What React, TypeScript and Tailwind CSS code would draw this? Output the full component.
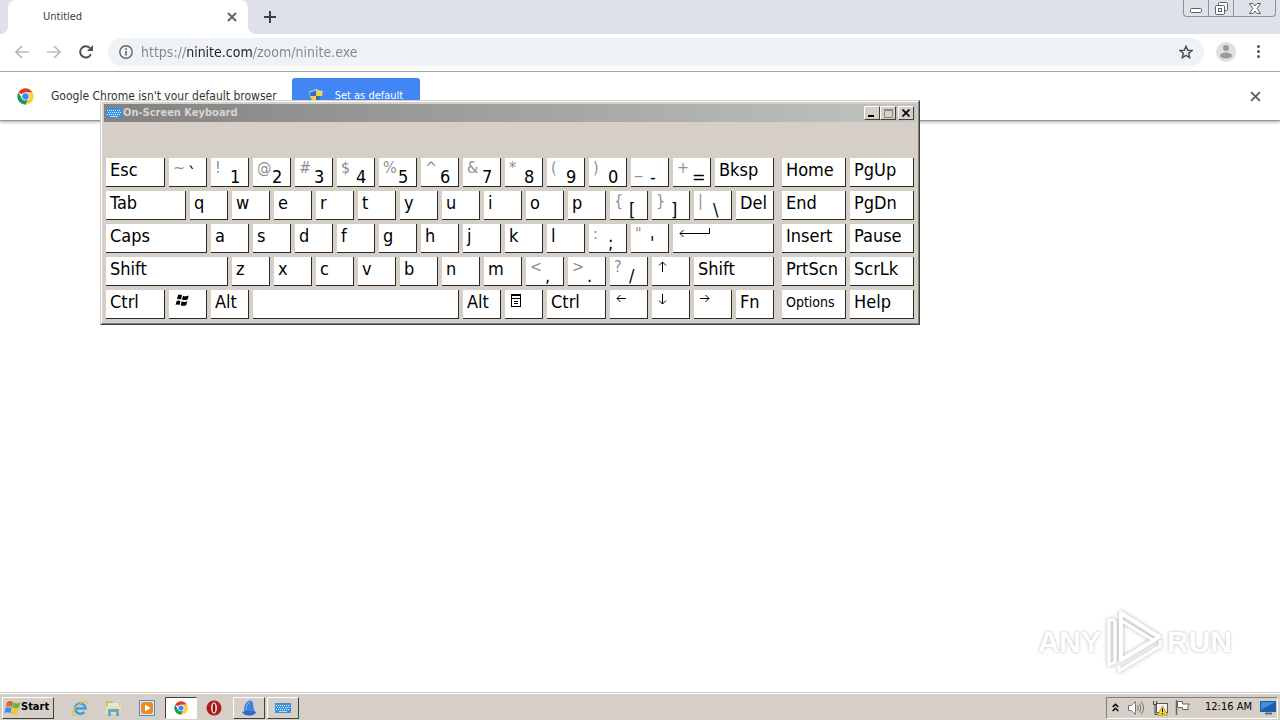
import React from "react";

const UI = "font-['DejaVu_Sans_Condensed','Noto_Sans',sans-serif]";
const BASE = "font-['Noto_Sans',sans-serif]";

function ChromeLogo({ size }: { size: number }) {
  return (
    <svg width={size} height={size} viewBox="0 0 48 48" aria-hidden="true">
      <circle cx="24" cy="24" r="23" fill="#fff" />
      <path d="M24 24 L4.1 12.5 A23 23 0 0 1 43.9 12.5 L24 12.5 Z" fill="#dd3b2d" />
      <path d="M4.1 12.5 A23 23 0 0 0 24 47 L34 29.8 L24 24 L14 29.8 Z" fill="#1a9a54" />
      <path d="M43.9 12.5 A23 23 0 0 1 24 47 L34 29.8 L24 12.5 Z" fill="#fdcf3f" />
      <circle cx="24" cy="24" r="11.5" fill="#fff" />
      <circle cx="24" cy="24" r="9" fill="#4285f4" />
    </svg>
  );
}

function ShieldIcon() {
  return (
    <svg width="14" height="14" viewBox="0 0 14 14" aria-hidden="true">
      <path d="M7 0 Q10 2 13.5 2 Q14 10 7 14 Q0 10 .5 2 Q4 2 7 0Z" fill="#d9e4ee" />
      <path d="M7 1 V7 H1.3 Q1 5 1.3 2.8 Q4.5 2.5 7 1Z" fill="#2f6fc4" />
      <path d="M7 1 V7 H12.7 Q13 5 12.7 2.8 Q9.5 2.5 7 1Z" fill="#f5cf3a" />
      <path d="M7 7 V13 Q2.2 11 1.3 7Z" fill="#f5cf3a" />
      <path d="M7 7 V13 Q11.8 11 12.7 7Z" fill="#2f6fc4" />
    </svg>
  );
}

function KeyboardIcon() {
  return (
    <svg width="16" height="10" viewBox="0 0 16 10" aria-hidden="true" shapeRendering="crispEdges">
      <rect width="16" height="10" fill="#3d90de" />
      <path d="M1 2.5h14M2 4.5h13M1 6.5h14" stroke="#e6f3ff" strokeDasharray="1 1" />
      <path d="M4 8.5h8" stroke="#b9dbf8" />
    </svg>
  );
}

function CrossIcon({ size, width }: { size: number; width: number }) {
  return (
    <svg width={size} height={size} viewBox="0 0 10 10" aria-hidden="true">
      <path d="M1 1 L9 9 M9 1 L1 9" stroke="#5f6368" strokeWidth={width} />
    </svg>
  );
}

function TabStrip() {
  return (
    <div className="flex h-[34px] items-start bg-[#dee1e8] pl-2">
      <div className="relative flex h-[34px] w-60 items-center justify-between rounded-t-lg bg-white pr-[11px] pl-[35px]">
        <span className={`text-[11px] leading-4 text-[#3c4043] ${UI}`}>Untitled</span>
        <button aria-label="Close tab" className="flex">
          <CrossIcon size={10} width={1.8} />
        </button>
        <span className="absolute bottom-0 -left-2 size-2 bg-[radial-gradient(circle_at_0_0,transparent_8px,white_8px)]" />
        <span className="absolute -right-2 bottom-0 size-2 bg-[radial-gradient(circle_at_100%_0,transparent_8px,white_8px)]" />
      </div>
      <button aria-label="New tab" className="mt-[11px] ml-4 flex">
        <svg width="12" height="12" viewBox="0 0 12 12" aria-hidden="true">
          <path d="M6 0V12M0 6H12" stroke="#3c4043" strokeWidth="2" />
        </svg>
      </button>
      <div className="mr-1 ml-auto flex h-[17px] divide-x divide-[#8d919b] rounded-b-[4px] border border-t-0 border-[#8d919b] text-[#5b5f68]">
        <button aria-label="Minimize" className="flex w-[25px] items-end justify-center pb-[3px]">
          <svg width="12" height="5" viewBox="0 0 12 5" aria-hidden="true">
            <rect x=".5" y=".5" width="11" height="4" rx="1" fill="#fff" stroke="currentColor" />
          </svg>
        </button>
        <button aria-label="Restore" className="flex w-[25px] items-center justify-center">
          <svg width="13" height="13" viewBox="0 0 13 13" aria-hidden="true" fill="#fff" stroke="currentColor">
            <rect x="3.5" y=".5" width="9" height="8" rx="1" />
            <rect x=".5" y="3.5" width="9" height="9" rx="1" />
            <rect x="3.5" y="6.5" width="3" height="3" />
          </svg>
        </button>
        <button aria-label="Close window" className="flex w-[41px] items-center justify-center">
          <svg width="12" height="11" viewBox="0 0 12 11" aria-hidden="true">
            <path
              d="M.5 .5H4L6 3L8 .5H11.5L8.2 5.5L11.5 10.5H8L6 8L4 10.5H.5L3.8 5.5Z"
              fill="#fff"
              stroke="currentColor"
            />
          </svg>
        </button>
      </div>
    </div>
  );
}

function Toolbar() {
  return (
    <div className="flex h-[38px] items-center border-b border-[#b0b0b0] bg-white pr-5 pb-[2px] pl-[15px]">
      <button aria-label="Back" className="flex">
        <svg width="14" height="14" viewBox="0 0 14 14" fill="none" stroke="#b8babd" strokeWidth="1.7" aria-hidden="true">
          <path d="M14 7H1.5M7 1L1 7L7 13" />
        </svg>
      </button>
      <button aria-label="Forward" className="ml-[18px] flex">
        <svg width="14" height="14" viewBox="0 0 14 14" fill="none" stroke="#b8babd" strokeWidth="1.7" aria-hidden="true">
          <path d="M0 7H12.5M7 1L13 7L7 13" />
        </svg>
      </button>
      <button aria-label="Reload" className="ml-[18px] flex">
        <svg width="14" height="14" viewBox="0 0 14 14" aria-hidden="true">
          <path d="M12 9A5.6 5.6 0 1 1 11 3.2" fill="none" stroke="#505357" strokeWidth="2" />
          <path d="M14 0V6H8Z" fill="#505357" />
        </svg>
      </button>
      <div className="ml-[15px] flex h-7 grow items-center rounded-full bg-[#f0f3f6] px-[11px]">
        <svg width="14" height="14" viewBox="0 0 14 14" fill="none" stroke="#5f6368" aria-hidden="true">
          <circle cx="7" cy="7" r="6.2" strokeWidth="1.4" />
          <path d="M7 6V10.5M7 3.3V4.9" strokeWidth="1.6" />
        </svg>
        <input
          aria-label="Address"
          defaultValue="https://ninite.com/zoom/ninite.exe"
          spellCheck={false}
          className={`ml-2 h-6 min-w-0 grow bg-[linear-gradient(90deg,#80868b_45px,#202124_45px,#202124_112px,#80868b_112px)] bg-clip-text text-[14px] text-transparent outline-none ${UI}`}
        />
        <button aria-label="Bookmark" className="flex">
          <svg width="14" height="14" viewBox="0 0 14 14" aria-hidden="true">
            <path
              d="M7 1.2L8.7 5.2L13 5.5L9.7 8.3L10.7 12.6L7 10.3L3.3 12.6L4.3 8.3L1 5.5L5.3 5.2Z"
              fill="none"
              stroke="#505357"
              strokeWidth="1.5"
            />
          </svg>
        </button>
      </div>
      <button aria-label="Profile" className="ml-3 flex">
        <svg width="20" height="20" viewBox="0 0 20 20" aria-hidden="true">
          <circle cx="10" cy="10" r="10" fill="#dfdfdf" />
          <circle cx="10" cy="6" r="3" fill="#9a9a9a" />
          <ellipse cx="10" cy="13.5" rx="6" ry="3" fill="#9a9a9a" />
        </svg>
      </button>
      <button aria-label="Menu" className="ml-[21px] flex w-[3px] flex-col gap-[2px]">
        <span className="size-[3px] rounded-full bg-[#505357]" />
        <span className="size-[3px] rounded-full bg-[#505357]" />
        <span className="size-[3px] rounded-full bg-[#505357]" />
      </button>
    </div>
  );
}

function InfoBar() {
  return (
    <div className="flex h-[49px] items-center border-b border-[#969696] bg-white pr-[19px] pl-[17px] shadow-[0_1px_3px_rgba(0,0,0,0.35)]">
      <ChromeLogo size={17} />
      <span className={`ml-[17px] text-[12px] text-[#333] ${UI}`}>
        Google Chrome isn't your default browser
      </span>
      <button
        className={`ml-[15px] flex h-9 items-center gap-3 rounded-[3px] bg-[#4285f4] px-[17px] text-[11px] text-white ${UI}`}
      >
        <ShieldIcon />
        Set as default
      </button>
      <button aria-label="Dismiss" className="ml-auto flex">
        <CrossIcon size={11} width={1.8} />
      </button>
    </div>
  );
}

type KeyDef = {
  main?: string;
  alt?: string;
  icon?: React.ReactNode;
  label?: string;
  width?: string;
  small?: boolean;
  high?: boolean;
};

const stroke = { fill: "none", stroke: "#000", strokeWidth: 1 };

const arrowLeft = (
  <svg width="10" height="9" viewBox="0 0 10 9" {...stroke} aria-hidden="true">
    <path d="M10 4.5H1M4.5 1L1 4.5L4.5 8" />
  </svg>
);
const arrowRight = (
  <svg width="10" height="9" viewBox="0 0 10 9" {...stroke} aria-hidden="true">
    <path d="M0 4.5H9M5.5 1L9 4.5L5.5 8" />
  </svg>
);
const arrowUp = (
  <svg width="9" height="11" viewBox="0 0 9 11" {...stroke} aria-hidden="true">
    <path d="M4.5 11V1M1 4.5L4.5 1L8 4.5" />
  </svg>
);
const arrowDown = (
  <svg width="9" height="11" viewBox="0 0 9 11" {...stroke} aria-hidden="true">
    <path d="M4.5 0V10M1 6.5L4.5 10L8 6.5" />
  </svg>
);
const enterArrow = (
  <svg width="32" height="10" viewBox="0 0 32 10" {...stroke} aria-hidden="true">
    <path d="M30.5 0V5.5H1M4.5 2L1 5.5L4.5 9" />
  </svg>
);
const winLogo = (
  <svg width="14" height="13" viewBox="0 0 14 13" fill="#000" aria-hidden="true">
    <path d="M3 1Q5 0 7 1.3L6 5.6Q4 4.4 2 5.3Z" />
    <path d="M8 1.8Q10.5 3 13.7 1.6L12.6 5.6Q9.5 6.6 7 5.6Z" />
    <path d="M1.7 6.9Q3.7 6 5.4 7L4.5 11Q2.7 9.9 .5 10.8Z" />
    <path d="M6.7 7.3Q9.3 8.5 12.3 7.2L11.2 11.2Q8.2 12.3 5.7 11.2Z" />
  </svg>
);
const menuIcon = (
  <svg width="10" height="13" viewBox="0 0 10 13" shapeRendering="crispEdges" aria-hidden="true">
    <path d="M.5 .5H9.5V12.5H.5Z" fill="#fff" stroke="#000" />
    <path d="M0 1.5H10M0 4.5H10M3 7.5H7M3 9.5H7" stroke="#000" />
  </svg>
);

const W59 = "w-[59px]";
const W64 = "w-16";
const W80 = "w-20";
const W101 = "w-[101px]";

const pair = (alt: string, main: string): KeyDef => ({ alt, main });
const letters = (s: string): KeyDef[] => s.split("").map((main) => ({ main }));

const mainRows: KeyDef[][] = [
  [
    { main: "Esc", width: W59 },
    { alt: "~", main: "`", high: true },
    pair("!", "1"),
    pair("@", "2"),
    pair("#", "3"),
    pair("$", "4"),
    pair("%", "5"),
    pair("^", "6"),
    pair("&", "7"),
    pair("*", "8"),
    pair("(", "9"),
    pair(")", "0"),
    pair("_", "-"),
    pair("+", "="),
    { main: "Bksp", width: W59 },
  ],
  [
    { main: "Tab", width: W80 },
    ...letters("qwertyuiop"),
    pair("{", "["),
    pair("}", "]"),
    pair("|", "\\"),
    { main: "Del" },
  ],
  [
    { main: "Caps", width: W101 },
    ...letters("asdfghjkl"),
    pair(":", ";"),
    pair('"', "'"),
    { icon: enterArrow, label: "Enter", width: W101 },
  ],
  [
    { main: "Shift", width: "w-[122px]" },
    ...letters("zxcvbnm"),
    pair("<", ","),
    pair(">", "."),
    pair("?", "/"),
    { icon: arrowUp, label: "Up" },
    { main: "Shift", width: W80 },
  ],
  [
    { main: "Ctrl", width: W59 },
    { icon: winLogo, label: "Windows" },
    { main: "Alt" },
    { label: "Space", width: "w-[206px]" },
    { main: "Alt" },
    { icon: menuIcon, label: "Application menu" },
    { main: "Ctrl", width: W59 },
    { icon: arrowLeft, label: "Left" },
    { icon: arrowDown, label: "Down" },
    { icon: arrowRight, label: "Right" },
    { main: "Fn" },
  ],
];

const sideRows: KeyDef[][] = [
  [{ main: "Home" }, { main: "PgUp" }],
  [{ main: "End" }, { main: "PgDn" }],
  [{ main: "Insert" }, { main: "Pause" }],
  [{ main: "PrtScn" }, { main: "ScrLk" }],
  [{ main: "Options", small: true }, { main: "Help" }],
].map((row) => row.map((k) => ({ ...k, width: W64 })));

function Key({ main, alt, icon, label, width = "w-[38px]", small, high }: KeyDef) {
  return (
    <button
      aria-label={label}
      className={`flex h-[29px] items-start border-r border-b border-[#2b2b2b] bg-white pl-1 text-left text-black ${width}`}
    >
      {alt && <span className="w-[15px] shrink-0 text-[16px] leading-5 text-[#8f8f8f]">{alt}</span>}
      {icon && <span className="pt-1 pl-[2px]">{icon}</span>}
      {main && (
        <span
          className={`${small ? "text-[14px]" : "text-[18px]"} ${high ? "pt-1" : alt ? "pt-[7px]" : ""} leading-6 whitespace-nowrap`}
        >
          {main}
        </span>
      )}
    </button>
  );
}

function KeyGrid({ rows }: { rows: KeyDef[][] }) {
  return (
    <div className="flex flex-col gap-1">
      {rows.map((row, r) => (
        <div key={r} className="flex gap-1">
          {row.map((k, i) => (
            <Key key={i} {...k} />
          ))}
        </div>
      ))}
    </div>
  );
}

const CAPTION =
  "flex h-[14px] w-4 items-center justify-center border border-t-white border-r-[#404040] border-b-[#404040] border-l-white bg-[#d5cfc8]";

function OnScreenKeyboard() {
  return (
    <section
      aria-label="On-Screen Keyboard"
      className="absolute top-[100px] left-[100px] border border-t-[#d5cfc8] border-r-[#404040] border-b-[#404040] border-l-[#d5cfc8] bg-[#d5cfc8]"
    >
      <div className="border border-t-white border-r-[#808080] border-b-[#808080] border-l-white p-[2px]">
        <div className="flex h-[18px] items-center bg-linear-to-r from-[#828282] to-[#c2c4c0] px-[2px]">
          <KeyboardIcon />
          <h1 className={`ml-px text-[11px] leading-4 font-bold text-[#d8d4cd] ${UI}`}>On-Screen Keyboard</h1>
          <div className="ml-auto flex">
            <button aria-label="Minimize keyboard" className={CAPTION}>
              <svg width="8" height="8" viewBox="0 0 8 8" aria-hidden="true">
                <path d="M0 7H6" stroke="#000" strokeWidth="2" />
              </svg>
            </button>
            <button aria-label="Maximize keyboard" disabled className={CAPTION}>
              <svg width="9" height="9" viewBox="0 0 9 9" shapeRendering="crispEdges" aria-hidden="true">
                <path d="M.5 .5H8.5V8.5H.5Z" fill="none" stroke="#8d8a84" />
                <path d="M0 1.5H9" stroke="#8d8a84" />
              </svg>
            </button>
            <button aria-label="Close keyboard" className={`ml-[2px] ${CAPTION}`}>
              <svg width="8" height="8" viewBox="0 0 8 8" aria-hidden="true">
                <path d="M.5 .5L7.5 7.5M7.5 .5L.5 7.5" stroke="#000" strokeWidth="1.6" />
              </svg>
            </button>
          </div>
        </div>
        <div className={`flex gap-2 px-[2px] pt-9 pb-[2px] ${UI}`}>
          <KeyGrid rows={mainRows} />
          <KeyGrid rows={sideRows} />
        </div>
      </div>
    </section>
  );
}

function Watermark() {
  return (
    <div
      aria-label="ANY RUN"
      className="absolute right-12 bottom-[14px] flex h-[72px] items-center gap-1 font-['Liberation_Sans',sans-serif] text-[30px] leading-[48px] font-bold text-white [text-shadow:0_0_3px_rgba(0,0,0,0.3)]"
    >
      <span>ANY</span>
      <svg
        width="58"
        height="66"
        viewBox="0 0 58 66"
        fill="none"
        stroke="#fff"
        strokeWidth="4"
        strokeLinejoin="round"
        className="drop-shadow-[0_0_2px_rgba(0,0,0,0.3)]"
        aria-hidden="true"
      >
        <path d="M16 4L54 28L16 51Z" />
        <path d="M10 11H4V56L10 53V12" strokeWidth="3" />
        <path d="M14 57V62L55 37V31" strokeWidth="3" />
        <path d="M17 12L48 31" strokeWidth="3" />
      </svg>
      <span>RUN</span>
    </div>
  );
}

const RAISED = "border border-t-white border-r-[#404040] border-b-[#404040] border-l-white";

function Taskbar() {
  return (
    <footer className="flex h-7 items-center border-t border-[#c9c5be] bg-[#d5cfc8] px-[2px] pt-[2px] shadow-[inset_0_1px_0_#fff]">
      <button
        className={`flex h-[22px] w-[52px] items-center pl-px text-[11px] font-bold text-black ${RAISED} ${UI}`}
      >
        <svg width="17" height="16" viewBox="0 0 17 16" aria-hidden="true">
          <path d="M3 2Q6 0 9 2L8 7.3Q5 5.5 1.8 7.2Z" fill="#e8622c" />
          <path d="M9.5 2.3Q12.5 4.5 16.5 2.3L15 7.6Q11.5 9.3 8.4 7.6Z" fill="#6fb53a" />
          <path d="M1.6 8Q4.5 6.3 7.7 8.1L6.4 13.3Q3.5 11.5 .3 13.2Z" fill="#3f8ede" />
          <path d="M8.2 8.5Q11.2 10.2 14.8 8.5L13.4 14Q10 15.8 6.9 13.8Z" fill="#f7c331" />
        </svg>
        Start
      </button>
      <nav aria-label="Taskbar" className="ml-[17px] flex items-center">
        <button aria-label="Internet Explorer" className="flex">
          <svg width="18" height="18" viewBox="0 0 18 18" fill="none" aria-hidden="true">
            <path d="M4.5 9.5H14.5A5.2 5.2 0 1 0 13.3 13" stroke="#3a9fe0" strokeWidth="2.6" />
            <path d="M16.5 4.5Q17 0 9.5 4.5Q1 10 1.5 15.5Q2 18 6.5 15" stroke="#edc03c" strokeWidth="1.2" />
          </svg>
        </button>
        <button aria-label="Windows Explorer" className="ml-4 flex">
          <svg width="17" height="16" viewBox="0 0 17 16" aria-hidden="true">
            <path d="M1 1H7L8 3H15V14H1Z" fill="#dcb95a" />
            <path d="M3 3H14V8H3Z" fill="#d6ecf7" />
            <path d="M1 6H16V14H1Z" fill="#f4e09a" />
            <path d="M3 9H14V16H11V12H6V16H3Z" fill="#5faadb" />
          </svg>
        </button>
        <button aria-label="Media Player" className="ml-[17px] flex">
          <svg width="16" height="16" viewBox="0 0 16 16" aria-hidden="true">
            <rect x=".5" y=".5" width="15" height="15" fill="#d4e8f7" stroke="#4b93cd" />
            <rect x="2" y="2" width="12" height="12" rx="3" fill="#f08a1c" />
            <path d="M6 4.5L11.5 8L6 11.5Z" fill="#fff" />
          </svg>
        </button>
        <button
          aria-label="Chrome"
          className="ml-[10px] flex h-[22px] w-8 items-center justify-center border border-t-[#404040] border-r-white border-b-white border-l-[#404040] bg-white"
        >
          <ChromeLogo size={14} />
        </button>
        <button aria-label="Opera" className="ml-[9px] flex">
          <svg width="16" height="16" viewBox="0 0 16 16" aria-hidden="true">
            <circle cx="8" cy="8" r="7.5" fill="#b3161c" />
            <ellipse cx="8" cy="8" rx="3" ry="5.8" fill="#e9dfd8" />
            <ellipse cx="8" cy="8" rx="1.3" ry="4.6" fill="#8d1115" />
          </svg>
        </button>
        <button aria-label="Network analyzer" className={`ml-[11px] flex h-[22px] w-8 items-center justify-center ${RAISED}`}>
          <svg width="16" height="16" viewBox="0 0 16 16" aria-hidden="true">
            <path d="M3 12Q2.5 2 9 .5Q12 .5 12 4Q12 8 14 12Z" fill="#3f7fe0" />
            <path d="M1 12Q8 10 15.5 12Q13 15.5 8 15.5Q3 15.5 1 12Z" fill="#3567bd" />
            <path d="M5 10Q5 4 9 2" stroke="#8db6f5" fill="none" />
          </svg>
        </button>
        <button aria-label="On-Screen Keyboard" className={`ml-[2px] flex h-[22px] w-8 items-center justify-center ${RAISED}`}>
          <KeyboardIcon />
        </button>
      </nav>
      <div className="ml-auto flex h-[22px] items-center border border-t-[#808080] border-r-white border-b-white border-l-[#808080] pr-px pl-[5px]">
        <button aria-label="Show hidden icons" className="flex">
          <svg width="7" height="9" viewBox="0 0 7 9" fill="none" stroke="#000" strokeWidth="1.5" aria-hidden="true">
            <path d="M.7 4L3.5 1.2L6.3 4M.7 8L3.5 5.2L6.3 8" />
          </svg>
        </button>
        <svg className="ml-[9px]" width="17" height="16" viewBox="0 0 17 16" fill="none" stroke="#777" aria-hidden="true">
          <path d="M.5 5.5H3.5L7.5 1.5V14.5L3.5 10.5H.5Z" fill="#fff" />
          <path d="M9.5 5.5Q11 8 9.5 10.5M11.5 3.5Q14 8 11.5 12.5M13.5 2Q17.5 8 13.5 14" />
        </svg>
        <svg className="ml-[7px]" width="16" height="16" viewBox="0 0 16 16" aria-hidden="true">
          <rect x="4.5" y="3.5" width="11" height="9" fill="#f4f4f4" stroke="#555" />
          <path d="M1.5 1V4.5H4.5V1M3 4.5V14.5H6" fill="none" stroke="#444" />
          <path d="M10.5 6L15.5 15H5.5Z" fill="#f8d21f" stroke="#a8871c" strokeWidth=".7" />
          <path d="M10.5 8.5V12M10.5 13V14.2" stroke="#000" />
        </svg>
        <svg className="ml-[7px]" width="16" height="15" viewBox="0 0 16 15" fill="#fff" stroke="#666" aria-hidden="true">
          <path d="M1.5 0V15" strokeWidth="1.5" />
          <path d="M2.5 1.5H7.5V4H14.5L12.5 6.5L13.5 9.5H7.5V7.5H2.5Z" />
        </svg>
        <time className={`ml-[14px] text-[11px] text-black ${UI}`}>12:16 AM</time>
        <svg className="ml-2" width="16" height="14" viewBox="0 0 16 14" aria-hidden="true">
          <rect width="16" height="11" fill="#1e5cad" />
          <path d="M1 1H15L1 9Z" fill="#3f8de0" />
          <path d="M5 12.5H12" stroke="#4a6c96" strokeWidth="2" />
        </svg>
      </div>
    </footer>
  );
}

export default function App() {
  return (
    <div className={`relative flex min-h-screen flex-col bg-white ${BASE}`}>
      <TabStrip />
      <Toolbar />
      <InfoBar />
      <main className="relative grow">
        <Watermark />
      </main>
      <Taskbar />
      <OnScreenKeyboard />
    </div>
  );
}
